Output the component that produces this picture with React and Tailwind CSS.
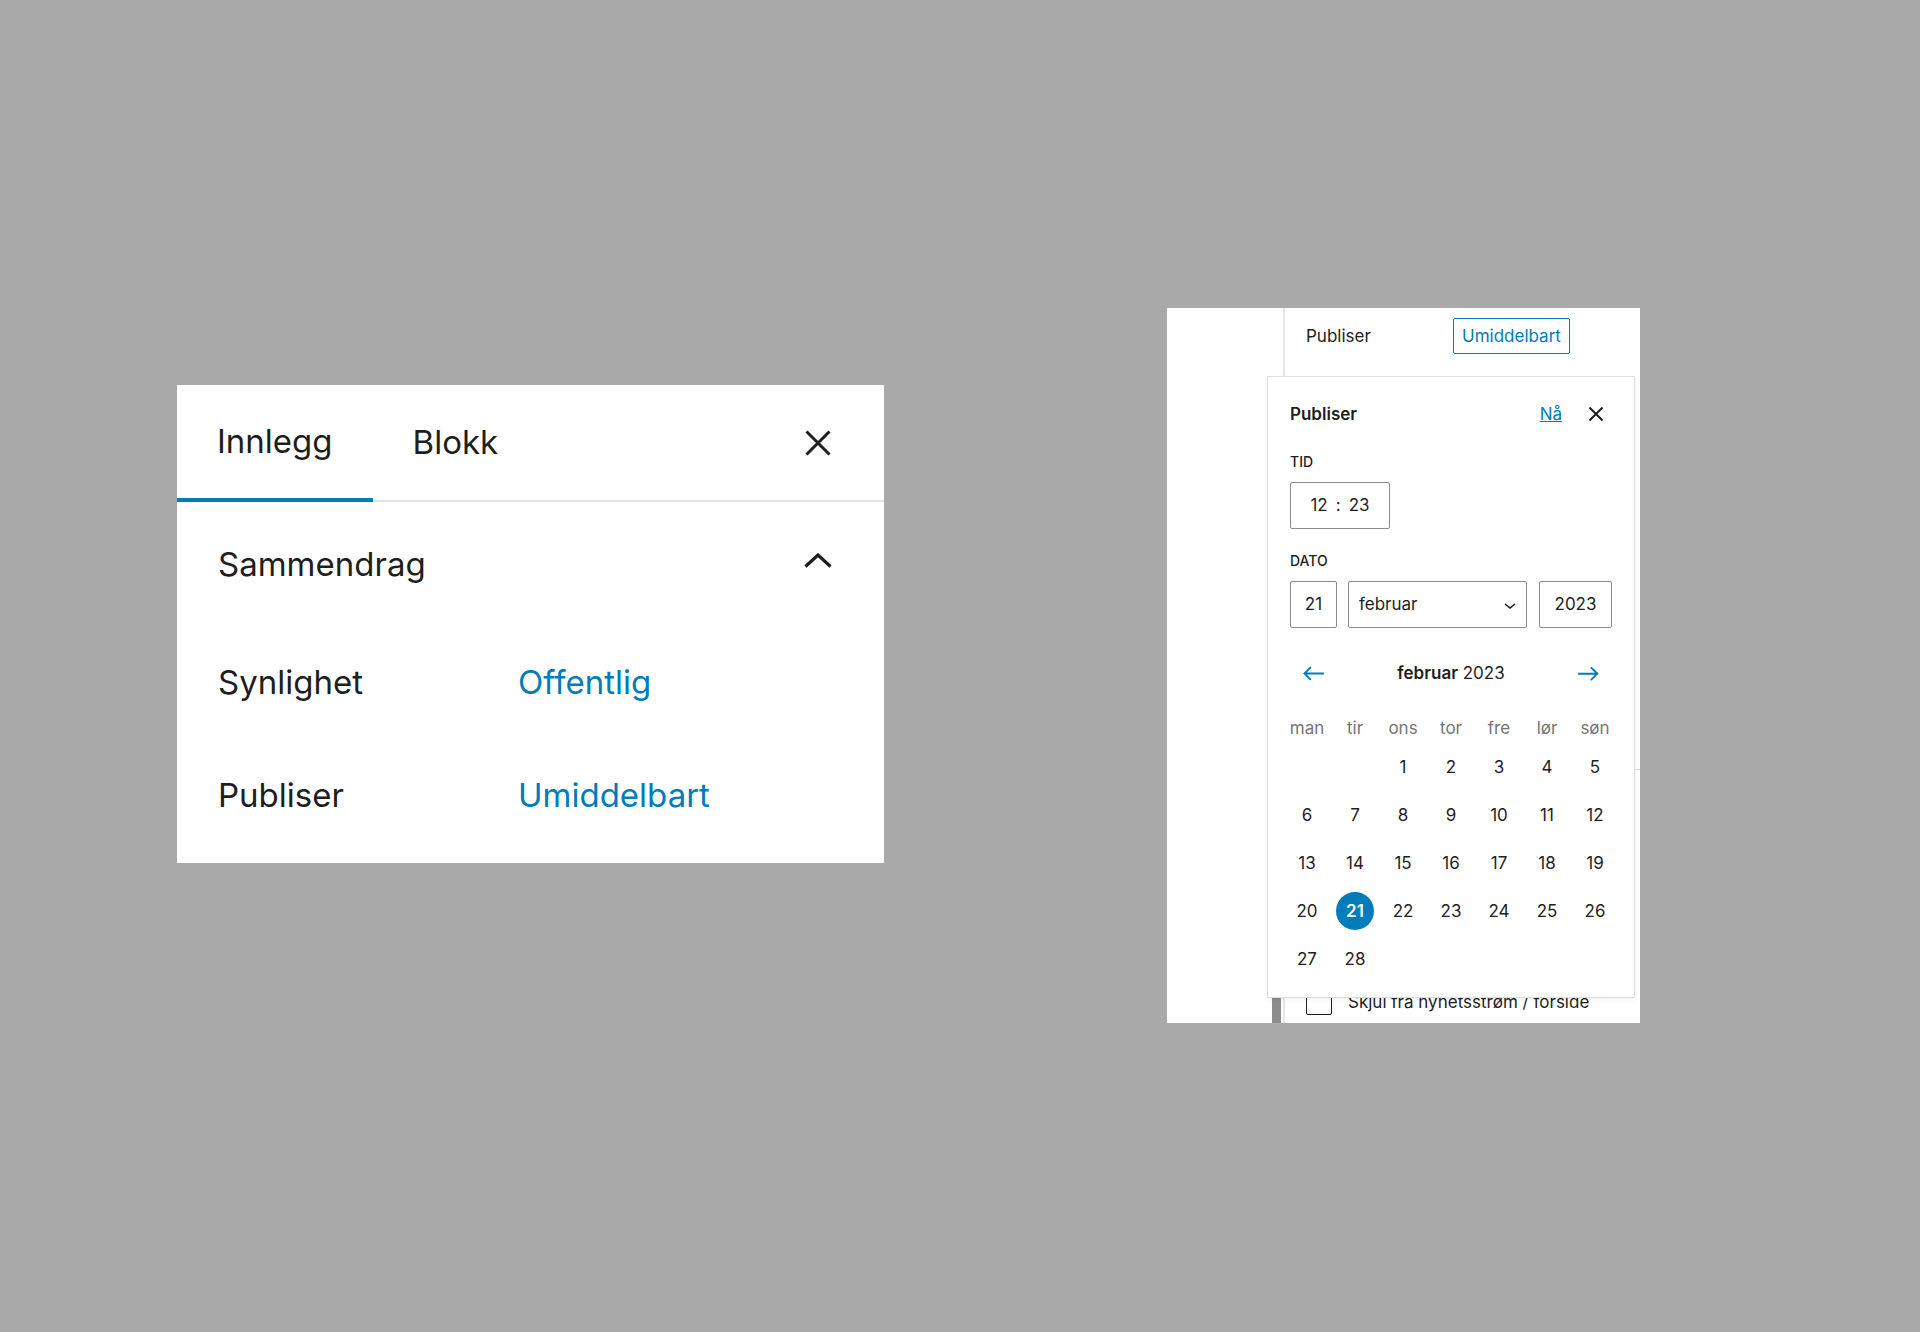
import React from 'react';

const weekdays = ['man', 'tir', 'ons', 'tor', 'fre', 'lør', 'søn'];

// Feb 2023 starts on a Wednesday
const weeks = [
    [null, null, 1, 2, 3, 4, 5],
    [6, 7, 8, 9, 10, 11, 12],
    [13, 14, 15, 16, 17, 18, 19],
    [20, 21, 22, 23, 24, 25, 26],
    [27, 28, null, null, null, null, null],
];

function CloseIcon({ size = 48, stroke = 3 }) {
    return (
        <svg width={size} height={size} viewBox="0 0 48 48" fill="none">
            <path d="M12.5 12.5L35.5 35.5M35.5 12.5L12.5 35.5" stroke="#1e1e1e" strokeWidth={stroke} />
        </svg>
    );
}

function ArrowLeft() {
    return (
        <svg width="31" height="31" viewBox="0 0 24 24" fill="#007cba">
            <path d="M20 11.2H6.8l3.7-3.7-1-1L3.9 12l5.6 5.5 1-1-3.7-3.7H20z" />
        </svg>
    );
}

function ArrowRight() {
    return (
        <svg width="31" height="31" viewBox="0 0 24 24" fill="#007cba">
            <path d="M14.3 6.7l-1 1 3.7 3.7H4v1.5h13l-3.7 3.7 1 1 5.6-5.6z" />
        </svg>
    );
}

function SummaryPanel() {
    return (
        <div className="ml-[177px] mt-[385px] w-[707px] h-[478px] shrink-0 bg-white flex flex-col text-[#1e1e1e]">
            {/* Tabs */}
            <div className="flex items-stretch h-[117px] border-b-2 border-[#e0e0e0]">
                <button className="-mb-[2px] border-b-4 border-[#007cba] px-[40px] text-[33px] leading-none">Innlegg</button>
                <button className="px-[40px] text-[33px] leading-none">Blokk</button>
                <button className="ml-auto mr-[42px] w-[48px] flex items-center justify-center">
                    <CloseIcon />
                </button>
            </div>

            {/* Section header */}
            <div className="h-[124px] flex items-center justify-between pl-[41px] pr-[52px]">
                <span className="text-[33px] leading-none">Sammendrag</span>
                <svg className="mb-[8px]" width="28" height="15" viewBox="0 0 28 15" fill="none">
                    <polyline points="1.5,13.5 14,2 26.5,13.5" stroke="#1e1e1e" strokeWidth="3.2" />
                </svg>
            </div>

            {/* Rows */}
            <div className="h-[113px] flex items-center pl-[41px] text-[33px] leading-none">
                <span className="w-[300px]">Synlighet</span>
                <span className="text-[#007cba]">Offentlig</span>
            </div>
            <div className="h-[113px] flex items-center pl-[41px] text-[33px] leading-none">
                <span className="w-[300px]">Publiser</span>
                <span className="text-[#007cba]">Umiddelbart</span>
            </div>
        </div>
    );
}

function DatePopover() {
    return (
        <div className="absolute left-[100px] top-[68px] w-[368px] h-[622px] bg-white border border-[#dddddd] shadow-[0_2px_6px_rgba(0,0,0,0.05)] px-[22px] pt-[19px]">
            {/* Header */}
            <div className="h-[36px] flex items-center">
                <span className="font-semibold">Publiser</span>
                <a href="#" className="ml-auto text-[#007cba] underline">Nå</a>
                <button className="ml-[22px] mr-[4px] w-[24px] h-[24px] flex items-center justify-center">
                    <svg width="24" height="24" viewBox="0 0 24 24" fill="none">
                        <path d="M5.5 5.5l13 13M18.5 5.5l-13 13" stroke="#1e1e1e" strokeWidth="2" />
                    </svg>
                </button>
            </div>

            {/* Time */}
            <div className="mt-[21px] text-[14px] leading-[18px] font-medium uppercase">Tid</div>
            <div className="mt-[11px] w-[100px] h-[47px] border border-[#8a8a8a] rounded-[2px] flex items-center justify-center gap-[8px]">
                <span>12</span>
                <span>:</span>
                <span>23</span>
            </div>

            {/* Date */}
            <div className="mt-[23px] text-[14px] leading-[18px] font-medium uppercase">Dato</div>
            <div className="mt-[11px] flex h-[47px]">
                <div className="w-[47px] border border-[#8a8a8a] rounded-[2px] flex items-center justify-center">21</div>
                <div className="ml-[11px] w-[179px] border border-[#8a8a8a] rounded-[2px] flex items-center justify-between pl-[10px] pr-[4px]">
                    <span>februar</span>
                    <svg width="24" height="24" viewBox="0 0 24 24" fill="#1e1e1e">
                        <path d="M17.5 11.6L12 16l-5.5-4.4.9-1.2L12 14l4.5-3.6 1 1.2z" />
                    </svg>
                </div>
                <div className="ml-[12px] w-[73px] border border-[#8a8a8a] rounded-[2px] flex items-center justify-center">2023</div>
            </div>

            {/* Month navigation */}
            <div className="mt-[27px] h-[36px] flex items-center justify-between px-[8px]">
                <ArrowLeft />
                <span><b className="font-semibold">februar</b> 2023</span>
                <ArrowRight />
            </div>

            {/* Calendar */}
            <div className="mt-[25px] -ml-[7px] w-[336px] grid grid-cols-7 h-[24px] items-center text-center text-[#757575]">
                {weekdays.map((d) => (
                    <span key={d}>{d}</span>
                ))}
            </div>
            <div className="mt-[3px] -ml-[7px] w-[336px]">
                {weeks.map((week, i) => (
                    <div key={i} className="grid grid-cols-7 h-[48px]">
                        {week.map((day, j) => (
                            <div key={j} className="flex items-center justify-center">
                                {day === 21 ? (
                                    <span className="w-[38px] h-[38px] rounded-full bg-[#007cba] text-white font-semibold flex items-center justify-center">21</span>
                                ) : (
                                    day
                                )}
                            </div>
                        ))}
                    </div>
                ))}
            </div>
        </div>
    );
}

function PublishPanel() {
    return (
        <div className="ml-[283px] mt-[308px] w-[473px] h-[715px] shrink-0 bg-white flex relative text-[#1e1e1e] text-[17px] leading-none">
            <div className="w-[105px]"></div>
            <div className="w-[9px] flex flex-col justify-end">
                <div className="h-[80px] bg-[#8c8c8c]"></div>
            </div>
            <div className="w-[2px]"></div>
            <div className="flex-1 border-l-2 border-[#e6e6e6] flex flex-col">
                <div className="h-[46px] pt-[10px] pl-[21px] flex items-center">
                    <span className="w-[147px]">Publiser</span>
                    <span className="h-[36px] px-[8px] border border-[#007cba] rounded-[2px] text-[#007cba] flex items-center">Umiddelbart</span>
                </div>
                <div className="mt-[415px] h-px bg-[#e0e0e0]"></div>
                <div className="mt-auto mb-[8px] pl-[21px] flex items-center gap-[16px]">
                    <span className="w-[26px] h-[26px] border-[1.5px] border-[#1e1e1e] rounded-[2px]"></span>
                    <span>Skjul fra nyhetsstrøm / forside</span>
                </div>
            </div>

            <DatePopover />
        </div>
    );
}

export default function App() {
    return (
        <div className="w-[1920px] h-[1332px] bg-[#a9a9a9] flex items-start overflow-hidden [font-family:Inter,sans-serif]">
            <SummaryPanel />
            <PublishPanel />
        </div>
    );
}
